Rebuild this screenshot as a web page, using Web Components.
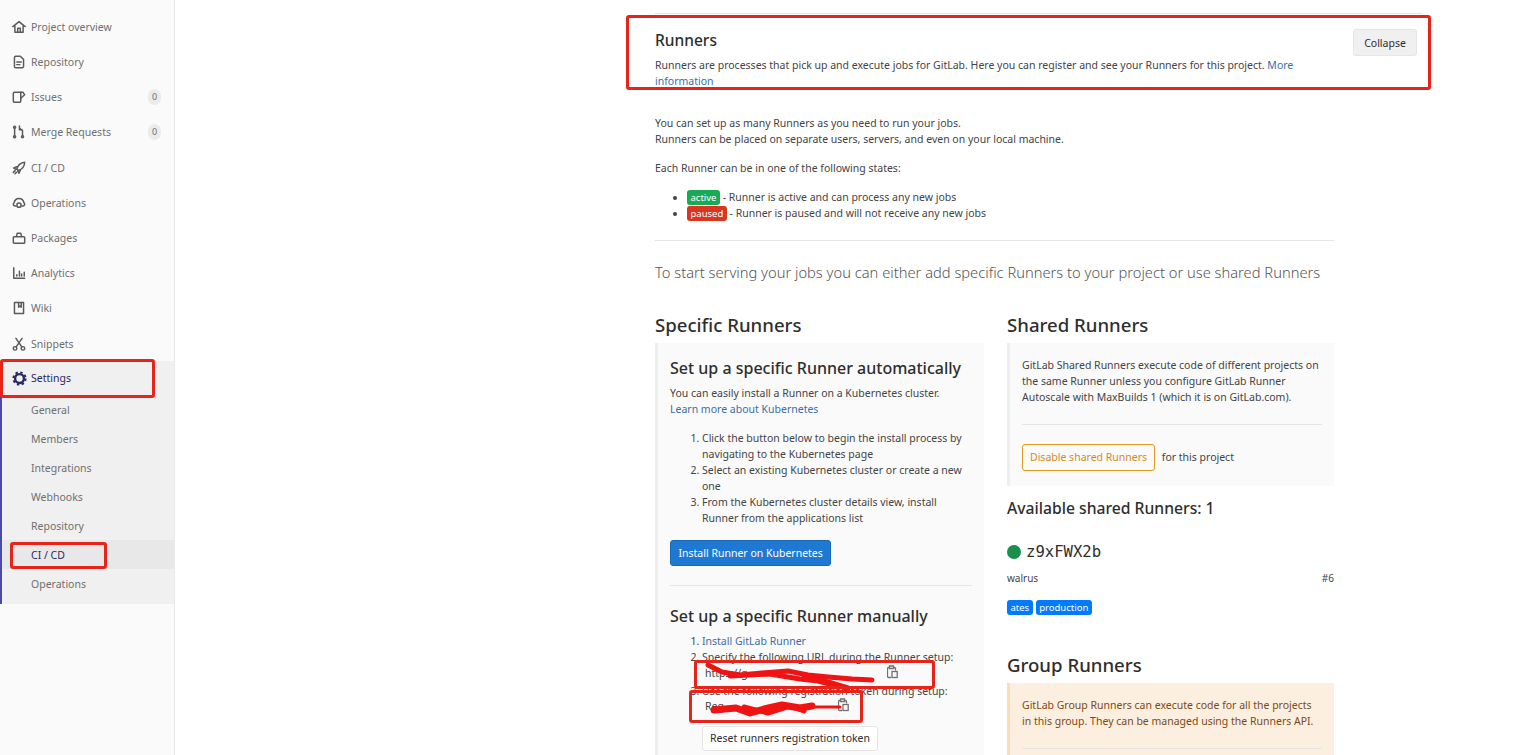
<!DOCTYPE html>
<html lang="en">
<head>
<meta charset="utf-8">
<title>CI / CD Settings</title>
<style>
  html, body { margin: 0; height: 755px; overflow: hidden; background: #fff; }
  body { font-family: "Noto Sans", "Open Sans", sans-serif; font-size: 10.5px; color: #2e2e2e; position: relative; }
  #app { display: flex; height: 755px; }
</style>
</head>
<body>
<div id="app">
  <nav-sidebar>
    <nav-item label="Project overview" icon="home"></nav-item>
    <nav-item label="Repository" icon="doc"></nav-item>
    <nav-item label="Issues" icon="issues" count="0"></nav-item>
    <nav-item label="Merge Requests" icon="merge" count="0"></nav-item>
    <nav-item label="CI / CD" icon="rocket"></nav-item>
    <nav-item label="Operations" icon="cloud"></nav-item>
    <nav-item label="Packages" icon="bag"></nav-item>
    <nav-item label="Analytics" icon="chart"></nav-item>
    <nav-item label="Wiki" icon="book"></nav-item>
    <nav-item label="Snippets" icon="scissors"></nav-item>
    <nav-group label="Settings">
      <sub-item>General</sub-item>
      <sub-item>Members</sub-item>
      <sub-item>Integrations</sub-item>
      <sub-item>Webhooks</sub-item>
      <sub-item>Repository</sub-item>
      <sub-item active>CI / CD</sub-item>
      <sub-item>Operations</sub-item>
    </nav-group>
  </nav-sidebar>
  <runners-page></runners-page>
</div>

<red-scribble></red-scribble>
<red-box style="left:0;top:359px;width:155px;height:39px"></red-box>
<red-box style="left:10px;top:542px;width:97px;height:27px"></red-box>
<red-box style="left:626px;top:15px;width:805px;height:75px"></red-box>
<red-box style="left:694px;top:660px;width:241px;height:29px"></red-box>
<red-box style="left:689px;top:690px;width:174px;height:33px"></red-box>

<script>
const ICONS = {
  home: '<path d="M1 7.5 8 1.800l7 5.700M3.300 6.500V14h9.400V6.500M6.500 14V9.500h3V14"/>',
  doc: '<path d="M2.800 3A1.500 1.500 0 0 1 4.300 1.500h5.200L13.200 5v8a1.500 1.500 0 0 1-1.500 1.500H4.300A1.500 1.500 0 0 1 2.800 13zM5.500 8h5M5.500 11h3.500"/>',
  issues: '<path d="M10 2.500H3A1.500 1.500 0 0 0 1.500 4v8.500A1.500 1.500 0 0 0 3 14h5.500a1.500 1.500 0 0 0 1.500-1.500V9.500l4.500-4-2-3z"/><path d="M10 2.500v7"/>',
  merge: '<path d="M3 4v8.500M12 12V6.500L8.500 3.500M8.500 1v4.500h3"/><circle cx="3" cy="2.500" r="1.200"/><circle cx="3" cy="13.500" r="1.200"/><circle cx="12" cy="13.500" r="1.200"/>',
  rocket: '<path d="M14.500 1.500C10 2 7 4.500 5.500 9l1.800 1.800C12 9.500 14.300 6 14.500 1.500zM5.500 6.500 2 8l2.500 1.500M9.500 10.500 8 14l-1.500-2.500M3.500 11 1.500 13M5 13l-1.500 1.500"/>',
  cloud: '<path d="M4.500 11.500H3.500C1.500 11.500.800 9 2.300 7.800 3 4.500 5.300 2.800 8 2.800s5 1.700 5.700 5c1.500 1.200.800 3.700-1.200 3.700h-1"/><circle cx="8" cy="10.500" r="2.400"/>',
  bag: '<path d="M2.500 6.500h11a1 1 0 0 1 1 1v5.500a1 1 0 0 1-1 1h-11a1 1 0 0 1-1-1V7.500a1 1 0 0 1 1-1zM5 6.500 6 2.500h4l1 4"/>',
  chart: '<path d="M2 2v12h12.500M5.500 11.500v-1.500M8.500 11.500V6M11 11.500V9M14 11.500V7"/>',
  book: '<path d="M2.800 1.800h10.400v12.400H2.800zM7.500 1.800v5.200l1.500-1.200 1.500 1.200V1.800"/>',
  scissors: '<circle cx="3.500" cy="13" r="2"/><circle cx="12.500" cy="13" r="2"/><path d="M4.800 11.300 11.500 1.500M11.200 11.300 4.500 1.500"/>'
};

// fila del menu lateral
class NavItem extends HTMLElement {
  constructor() {
    super();
    this._shadow = this.attachShadow({ mode: 'open' });
  }
  connectedCallback() {
    const count = this.getAttribute('count');
    this._shadow.innerHTML = `
      <style>
        :host { display: flex; align-items: center; height: 35.2px; padding: 0 13px 0 12px; color: #6f6f6f; }
        svg { width: 14px; height: 14px; fill: none; stroke: #5a5a5a; stroke-width: 1.7; stroke-linecap: round; stroke-linejoin: round; margin-right: 5px; flex: none; }
        span { flex: 1; white-space: nowrap; }
        b { font-weight: 400; font-size: 9px; width: 13px; height: 16px; line-height: 15px; text-align: center; border-radius: 7px; background: #ebebeb; color: #707070; }
      </style>
      <svg viewBox="0 0 16 16">${ICONS[this.getAttribute('icon')]}</svg>
      <span>${this.getAttribute('label')}</span>
      ${count !== null ? `<b>${count}</b>` : ''}`;
  }
}

class NavGroup extends HTMLElement {
  constructor() {
    super();
    this._shadow = this.attachShadow({ mode: 'open' });
  }
  connectedCallback() {
    this._shadow.innerHTML = `
      <style>
        :host { display: block; background: #f0f0f0; border-left: 2px solid #4b4ba3; padding-bottom: 6px; }
        .head { display: flex; align-items: center; height: 34px; padding-left: 10px; color: #292961; }
        svg { width: 15px; height: 15px; fill: none; stroke: #292961; margin-right: 4px; flex: none; }
      </style>
      <div class="head">
        <svg viewBox="0 0 16 16"><circle cx="8" cy="8" r="4.700" stroke-width="2.600"/><circle cx="8" cy="8" r="6.600" stroke-width="2" stroke-dasharray="2.600 2.580"/></svg>
        <span>${this.getAttribute('label')}</span>
      </div>
      <slot></slot>`;
  }
}

class SubItem extends HTMLElement {
  constructor() {
    super();
    this._shadow = this.attachShadow({ mode: 'open' });
    this._shadow.innerHTML = `
      <style>
        :host { display: flex; align-items: center; height: 29px; padding-left: 29px; color: #6f6f6f; }
        :host([active]) { background: #e8e8e8; color: #292961; }
      </style>
      <slot></slot>`;
  }
}

class NavSidebar extends HTMLElement {
  constructor() {
    super();
    this._shadow = this.attachShadow({ mode: 'open' });
    this._shadow.innerHTML = `
      <style>
        :host { display: block; flex: none; width: 175px; height: 755px; padding-top: 9.3px; box-sizing: border-box; background: #fafafa; border-right: 1px solid #e9e9e9; }
      </style>
      <slot></slot>`;
  }
}

class StateBadge extends HTMLElement {
  constructor() {
    super();
    this._shadow = this.attachShadow({ mode: 'open' });
    this._shadow.innerHTML = `
      <style>
        :host { display: inline-block; background: var(--bg, #1aaa55); color: #fff; font-size: 9.5px; line-height: 15px; padding: 0 3.5px; border-radius: 3px; }
      </style>
      <slot></slot>`;
  }
}

class CopyIcon extends HTMLElement {
  constructor() {
    super();
    this._shadow = this.attachShadow({ mode: 'open' });
    this._shadow.innerHTML = `
      <style>
        :host { display: block; width: 11px; height: 14px; margin-top: 0; flex: none; }
        svg { width: 11px; height: 14px; fill: none; stroke: #707070; stroke-width: 1.3; }
      </style>
      <svg viewBox="0 0 11 14"><path d="M7 2.500h.5a1 1 0 0 1 1 1v2M4 12.500H1.500a1 1 0 0 1-1-1v-8a1 1 0 0 1 1-1H2M2.500 1h4v2.500h-4z"/><rect x="5" y="6.500" width="5.200" height="6"/></svg>`;
  }
}

// bloque gris con borde a la izquierda
class RunnerCard extends HTMLElement {
  constructor() {
    super();
    this._shadow = this.attachShadow({ mode: 'open' });
    this._shadow.innerHTML = `
      <style>
        :host { display: block; background: var(--card-bg, #fafafa); border-left: 3px solid var(--card-line, #eee); padding: 14px 12px 14px 12px; }
      </style>
      <slot></slot>`;
  }
}

class RunnersPage extends HTMLElement {
  constructor() {
    super();
    this._shadow = this.attachShadow({ mode: 'open' });
    this._shadow.innerHTML = `
      <style>
        :host { display: block; flex: 1; padding: 13px 0 0 480px; line-height: 16px; font-size: 10.5px; color: #2e2e2e; overflow: hidden; }
        a { color: #3b6ea5; text-decoration: none; }
        p { margin: 0; }
        .settings { width: 767px; border-top: 1px solid #e5e5e5; }
        .head { display: flex; justify-content: space-between; align-items: flex-start; padding-top: 15px; height: 68px; box-sizing: content-box; }
        h4 { margin: 0; font-size: 15.5px; line-height: 22px; font-weight: 500; color: #2e2e2e; }
        .desc { width: 650px; margin-top: 6px; color: #444; }
        .collapse { width: 64px; height: 27px; box-sizing: border-box; margin-right: 5px; border: 1px solid #e6e6e6; border-radius: 3px; background: #f0f0f0; color: #2e2e2e; font: inherit; }
        .body { width: 679px; margin-top: 18px; color: #444; }
        .intro { margin-top: 13px; }
        ul { margin: 13px 0 0; padding: 0 0 0 32px; }
        hr { border: 0; border-top: 1px solid #e5e5e5; margin: 0; }
        .lead { font-size: 14.7px; line-height: 20px; font-weight: 300; color: #555; margin-top: 21px; white-space: nowrap; }
        .cols { display: grid; grid-template-columns: 329px 327px; column-gap: 23px; margin-top: 31px; }
        h3 { font-size: 18.6px; line-height: 24px; font-weight: 500; color: #2e2e2e; margin: 0 0 6px; }
        h5 { font-size: 16px; line-height: 22px; font-weight: 500; color: #2e2e2e; margin: 0 0 6px; }
        ol { margin: 13px 0 0; padding: 0 0 0 32px; }
        .install { display: inline-block; background: #1f78d1; border: 1px solid #1b69b6; border-radius: 3px; color: #fff; padding: 0 7.5px; line-height: 24px; margin-top: 14px; }
        .sep { border-top: 1px solid #e5e5e5; margin: 19px 0; }
        .code { display: flex; justify-content: space-between; padding-left: 3px; height: 16px; }
        .reset { display: inline-block; background: #fff; border: 1px solid #e5e5e5; border-radius: 3px; color: #2e2e2e; padding: 0 7px; line-height: 23px; margin: 12px 0 0 32px; }
        .disable { display: inline-block; border: 1px solid #e39a1f; border-radius: 3px; color: #d48a1a; padding: 0 7px; line-height: 25px; margin-right: 4px; }
        .avail { font-size: 15.7px; font-weight: 500; line-height: 22px; margin: 11px 0 0; color: #2e2e2e; }
        .runner { display: flex; align-items: center; margin-top: 23px; font: 15.6px/20px "DejaVu Sans Mono", monospace; color: #2e2e2e; }
        .dot { width: 14px; height: 14px; border-radius: 50%; background: #1a8f4c; margin-right: 5px; }
        .meta { display: flex; justify-content: space-between; margin-top: 8px; font-size: 10px; }
        .tags { display: flex; gap: 3px; margin-top: 14px; --bg: #007bff; }
        .group { margin-top: 38px; }
        .warn { --card-bg: #fdefdf; --card-line: #fbdcb6; color: #7a4a14; }
      </style>
      <div class="settings">
        <div class="head">
          <div>
            <h4>Runners</h4>
            <p class="desc">Runners are processes that pick up and execute jobs for GitLab. Here you can register and see your Runners for this project. <a>More</a> <a>information</a></p>
          </div>
          <button class="collapse">Collapse</button>
        </div>
      </div>
      <div class="body">
        <p>You can set up as many Runners as you need to run your jobs.<br>Runners can be placed on separate users, servers, and even on your local machine.</p>
        <p class="intro">Each Runner can be in one of the following states:</p>
        <ul>
          <li><state-badge>active</state-badge> - Runner is active and can process any new jobs</li>
          <li><state-badge style="--bg:#d9351f">paused</state-badge> - Runner is paused and will not receive any new jobs</li>
        </ul>
        <hr style="margin-top:19px">
        <p class="lead">To start serving your jobs you can either add specific Runners to your project or use shared Runners</p>
        <div class="cols">
          <div>
            <h3>Specific Runners</h3>
            <runner-card>
              <h5>Set up a specific Runner automatically</h5>
              <p>You can easily install a Runner on a Kubernetes cluster.<br><a>Learn more about Kubernetes</a></p>
              <ol>
                <li>Click the button below to begin the install process by navigating to the Kubernetes page</li>
                <li>Select an existing Kubernetes cluster or create a new one</li>
                <li>From the Kubernetes cluster details view, install Runner from the applications list</li>
              </ol>
              <a class="install">Install Runner on Kubernetes</a>
              <div class="sep"></div>
              <h5>Set up a specific Runner manually</h5>
              <ol style="margin-top:0">
                <li><a>Install GitLab Runner</a></li>
                <li>Specify the following URL during the Runner setup:<div class="code" style="width:193px"><span>https://g</span><copy-icon></copy-icon></div></li>
                <li style="margin-top:2px">Use the following registration token during setup:<div class="code" style="width:144px;margin-top:-1px"><span>Reg</span><copy-icon></copy-icon></div></li>
              </ol>
              <a class="reset">Reset runners registration token</a>
            </runner-card>
          </div>
          <div>
            <h3>Shared Runners</h3>
            <runner-card style="padding-bottom:15px">
              <p>GitLab Shared Runners execute code of different projects on the same Runner unless you configure GitLab Runner Autoscale with MaxBuilds 1 (which it is on GitLab.com).</p>
              <div class="sep"></div>
              <p><a class="disable">Disable shared Runners</a> for this project</p>
            </runner-card>
            <p class="avail">Available shared Runners: 1</p>
            <div class="runner"><i class="dot"></i>z9xFWX2b</div>
            <div class="meta"><span>walrus</span><span>#6</span></div>
            <div class="tags"><state-badge>ates</state-badge><state-badge>production</state-badge></div>
            <h3 class="group">Group Runners</h3>
            <runner-card class="warn">
              <p>GitLab Group Runners can execute code for all the projects in this group. They can be managed using the Runners API.</p>
              <div class="sep"></div>
            </runner-card>
          </div>
        </div>
      </div>`;
  }
}

// recuadros rojos de la captura anotada
class RedBox extends HTMLElement {
  constructor() {
    super();
    this._shadow = this.attachShadow({ mode: 'open' });
    this._shadow.innerHTML = `
      <style>
        :host { display: block; position: absolute; box-sizing: border-box; border: 3px solid #e8231a; border-radius: 3px; pointer-events: none; }
      </style>`;
  }
}

// tachones que tapan la url y el token
class RedScribble extends HTMLElement {
  constructor() {
    super();
    this._shadow = this.attachShadow({ mode: 'open' });
    this._shadow.innerHTML = `
      <style>
        :host { display: block; position: absolute; left: 700px; top: 660px; width: 180px; height: 60px; pointer-events: none; }
        svg { display: block; width: 180px; height: 60px; fill: none; stroke: #f01313; stroke-linecap: round; stroke-linejoin: round; }
      </style>
      <svg viewBox="0 0 180 60">
        <path stroke-width="5" d="M8 5 22 12 40 15 62 13 88 11 108 15 128 17 152 19 172 20"/>
        <path stroke-width="5" d="M30 16 70 14 100 19 118 21 138 26 148 28 128 22 104 17"/>
        <path stroke-width="7" d="M14 50 36 48 50 53 64 49 82 45 100 48 112 46"/>
        <path stroke-width="3" d="M112 47 140 47"/>
        <path stroke-width="5" d="M44 47 68 53 90 46 104 51"/>
      </svg>`;
  }
}

customElements.define('nav-item', NavItem);
customElements.define('nav-group', NavGroup);
customElements.define('sub-item', SubItem);
customElements.define('nav-sidebar', NavSidebar);
customElements.define('state-badge', StateBadge);
customElements.define('copy-icon', CopyIcon);
customElements.define('runner-card', RunnerCard);
customElements.define('runners-page', RunnersPage);
customElements.define('red-box', RedBox);
customElements.define('red-scribble', RedScribble);
</script>
</body>
</html>
